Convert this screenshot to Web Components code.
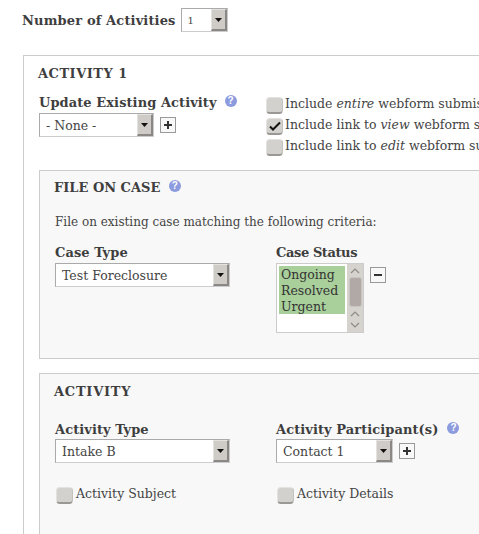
<!DOCTYPE html>
<html><head><meta charset="utf-8">
<style>
html,body{margin:0;padding:0;background:#fff;overflow:hidden;width:479px;height:534px}
body{font:12.5px/21px "DejaVu Serif","Liberation Serif",serif;color:#3e3e3e}
</style></head><body>
<x-app></x-app>
<script>
function def(name,css,html){
  customElements.define(name,class extends HTMLElement{
    constructor(){super();const r=this.attachShadow({mode:'open'});
      const h=typeof html==='function'?html(this):html;
      r.innerHTML='<style>'+css+'</style>'+h;}
  });
}
const arrow=`<span class="btn"><svg width="7" height="4" viewBox="0 0 7 4"><path d="M0 0h7L3.5 4z" fill="#111"/></svg></span>`;
def('x-select',`
:host{display:inline-flex;box-sizing:border-box;height:24px;border:1px solid #aaa;border-right-color:#ccc;border-bottom-color:#ccc;background:#fff;align-items:stretch;vertical-align:top}
.t{flex:1;padding-left:6px;font-size:var(--fs,12.5px);line-height:23px;color:#444;white-space:nowrap;overflow:hidden}
.btn{width:16px;background:#cfcbc6;border-right:2px solid #8b8784;border-bottom:2px solid #8b8784;border-left:1px solid #e4e2df;border-top:1px solid #e4e2df;box-sizing:border-box;display:flex;align-items:center;justify-content:center}
`,el=>`<span class="t"><slot></slot></span>${arrow}`);
def('x-help',`
:host{display:inline-block;width:12px;height:12px;border-radius:50%;background:#8c9ade;color:#fff;font:bold 10px/12px "Liberation Sans",sans-serif;text-align:center;vertical-align:3px;letter-spacing:0}
`,`?`);
def('x-addbtn',`
:host{display:inline-flex;box-sizing:border-box;width:16px;height:16px;border:1px solid #999;background:#f8f8f8;align-items:center;justify-content:center}
`,el=>el.getAttribute('kind')==='minus'
  ?`<svg width="8" height="8" viewBox="0 0 8 8"><path d="M0 3h8v2H0z" fill="#333"/></svg>`
  :`<svg width="8" height="8" viewBox="0 0 8 8"><path d="M3 0h2v3h3v2H5v3H3V5H0V3h3z" fill="#333"/></svg>`);
def('x-check',`
:host{display:flex;align-items:flex-start;height:21px;white-space:nowrap;color:#444;font-size:12.5px}
.b{flex:none;box-sizing:border-box;width:17px;height:17px;margin:4px var(--gap,2px) 0 0;border-radius:4px;background:#d3d1cd;border:1px solid #e4e2df;border-bottom:2px solid #9a9894;border-right-color:#c4c2be;display:flex;align-items:center;justify-content:center}
`,el=>`<span class="b">${el.hasAttribute('checked')?'<svg width="12" height="10" viewBox="0 0 12 10"><path d="M1 5.5l3 3L11 1.5" fill="none" stroke="#111" stroke-width="2"/></svg>':''}</span><span><slot></slot></span>`);
def('x-label',`
:host{display:block;font-weight:bold;font-size:13px;line-height:20px;height:20px;color:#3e3e3e;white-space:nowrap;letter-spacing:var(--ls,.08px)}
`,`<slot></slot>`);
def('x-listbox',`
:host{display:flex;box-sizing:border-box;width:88px;height:70px;border:1px solid #ccc;background:#fff}
.l{flex:1;padding:2px}
.o{background:#a9cf9b;color:#333;font-size:12.5px;line-height:16px;padding:1px 0 0 2px;height:48px;box-sizing:border-box}
.s{width:16px;background:#d6d3ce;display:flex;flex-direction:column;align-items:center;justify-content:flex-start}
.th{width:13px;height:30px;margin:3px 0 4px;border-radius:3px;background:#b0a9a6;border:1px solid #c8c5c1;box-sizing:border-box}
svg{display:block;margin-top:4px}
`,`<div class="l"><div class="o">Ongoing<br>Resolved<br>Urgent</div></div>
<div class="s"><svg width="10" height="6" viewBox="0 0 10 6"><path d="M1 5l4-4 4 4" fill="none" stroke="#8e8b87" stroke-width="1.2"/></svg>
<div class="th"></div>
<svg style="margin-top:0" width="10" height="6" viewBox="0 0 10 6"><path d="M1 5l4-4 4 4" fill="none" stroke="#8e8b87" stroke-width="1.2"/></svg>
<svg style="margin-top:5px" width="10" height="6" viewBox="0 0 10 6"><path d="M1 1l4 4 4-4" fill="none" stroke="#8e8b87" stroke-width="1.2"/></svg></div>`);
def('x-panel',`
:host{display:block;box-sizing:border-box;width:520px;background:#f8f8f8;border:1px solid #ccc;padding:7px 14px 0 14px;height:var(--h,auto)}
.h{font-weight:bold;font-size:13px;line-height:20px;height:20px;color:#3e3e3e;white-space:nowrap;letter-spacing:var(--ls,0)}
`,el=>`<div class="h">${el.getAttribute('heading')} <slot name="help"></slot></div><slot></slot>`);
def('x-app',`
:host{display:block;padding:8px 0 0 22px;width:600px}
.top{display:flex;align-items:flex-start;gap:5px;height:47px}
.top x-label{margin-top:3px;--ls:.15px;height:19px}
.outer{box-sizing:border-box;margin-left:1px;width:560px;height:520px;border:1px solid #ccc;border-bottom:0;padding:8px 15px}
.ttl{font-weight:bold;font-size:13px;line-height:20px;height:20px;color:#3e3e3e;margin-left:-1px;letter-spacing:.5px}
.upper{display:grid;grid-template-columns:227px auto;height:77px;margin-top:9px}
.row{display:flex;gap:6px;align-items:flex-start}
x-panel{--h:189px;margin:0 0 14px 0}
.intro{font-size:12px;color:#444;white-space:nowrap;margin:14px 0 0 1px;line-height:21px}
.cols{display:grid;grid-template-columns:221px auto;margin:10px 0 0 1px}
.cols.b{margin-top:17px}
.cols.b x-label{padding-top:1px;height:19px}
.cols.c{margin-top:20px}
.cols x-check{--gap:3px;margin-left:1px}
.label-h x-help{margin-left:8px}
.cols .label-h x-help{margin-left:9px}
.pm{margin-top:4px}
`,`<div class="top"><x-label>Number of Activities</x-label><x-select style="width:47px;--fs:10px">1</x-select></div>
<div class="outer">
  <div class="ttl">ACTIVITY 1</div>
  <div class="upper">
    <div><x-label class="label-h">Update Existing Activity<x-help></x-help></x-label>
      <div class="row"><x-select style="width:115px">- None -</x-select><x-addbtn class="pm"></x-addbtn></div></div>
    <div>
      <x-check>Include <i>entire</i> webform submission</x-check>
      <x-check checked>Include link to <i>view</i> webform submission</x-check>
      <x-check>Include link to <i>edit</i> webform submission</x-check>
    </div>
  </div>
  <x-panel heading="FILE ON CASE"><x-help slot="help" style="margin-left:4px"></x-help>
    <div class="intro">File on existing case matching the following criteria:</div>
    <div class="cols">
      <div><x-label style="--ls:.08px">Case Type</x-label><x-select style="width:175px">Test Foreclosure</x-select></div>
      <div><x-label style="--ls:-.4px">Case Status</x-label><div class="row"><x-listbox></x-listbox><x-addbtn kind="minus" class="pm"></x-addbtn></div></div>
    </div>
  </x-panel>
  <x-panel heading="ACTIVITY" style="--h:200px;--ls:.75px;padding-top:8px">
    <div class="cols b">
      <div><x-label style="--ls:.08px">Activity Type</x-label><x-select style="width:175px">Intake B</x-select></div>
      <div><x-label class="label-h" style="--ls:.08px">Activity Participant(s)<x-help></x-help></x-label><div class="row"><x-select style="width:117px">Contact 1</x-select><x-addbtn class="pm"></x-addbtn></div></div>
    </div>
    <div class="cols c">
      <x-check>Activity Subject</x-check>
      <x-check>Activity Details</x-check>
    </div>
  </x-panel>
</div>`);
</script>
</body></html>
